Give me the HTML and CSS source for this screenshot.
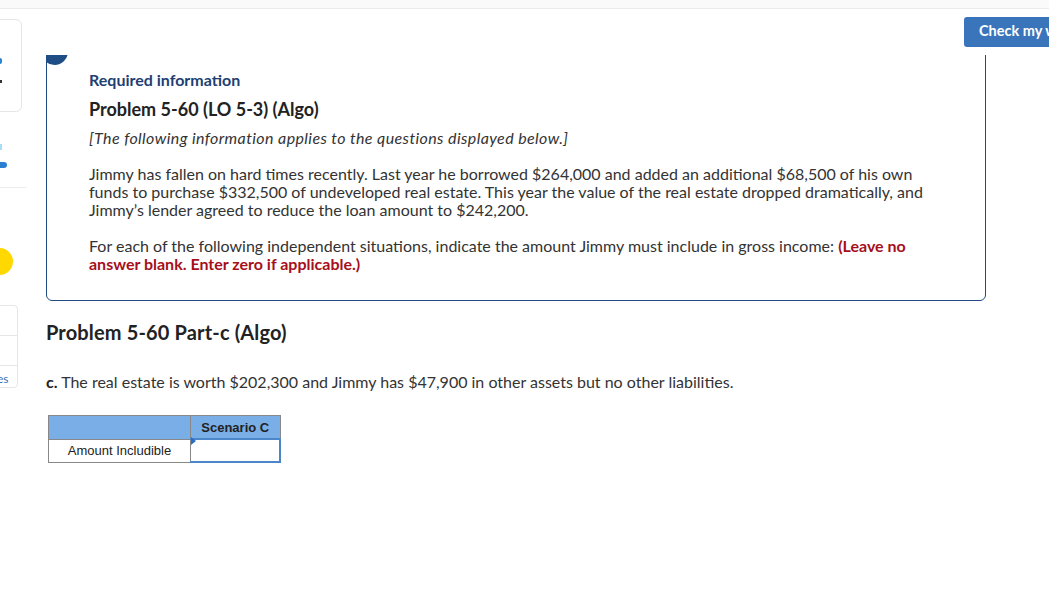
FILE: index.html
```html
<!DOCTYPE html>
<html>
<head>
<meta charset="utf-8">
<link rel="stylesheet" href="styles.css">
</head>
<body>
<div class="topbar"></div>
<div class="page">
  <aside class="sidebar">
    <div class="side-card">
      <span class="sc-a"></span>
      <span class="sc-b"></span>
    </div>
    <div class="side-nav">
      <span class="sn-mark"></span>
      <span class="sn-bar"></span>
    </div>
    <div class="side-sep"></div>
    <div class="side-dot"></div>
    <div class="side-list">
      <div class="sl-row"></div>
      <div class="sl-row"></div>
      <div class="sl-row sl-last">es</div>
    </div>
  </aside>
  <main class="main">
    <header class="head">
      <button class="check">Check my work</button>
    </header>
    <div class="scroll">
      <section class="card">
        <span class="badge"></span>
        <h3 class="req">Required information</h3>
        <h2 class="prob">Problem 5-60 (LO 5-3) (Algo)</h2>
        <p class="note">[The following information applies to the questions displayed below.]</p>
        <p class="para">Jimmy has fallen on hard times recently. Last year he borrowed $264,000 and added an additional $68,500 of his own funds to purchase $332,500 of undeveloped real estate. This year the value of the real estate dropped dramatically, and Jimmy’s lender agreed to reduce the loan amount to $242,200.</p>
        <p class="para para2">For each of the following independent situations, indicate the amount Jimmy must include in gross income: <strong class="warn">(Leave no answer blank. Enter zero if applicable.)</strong></p>
      </section>
      <h2 class="part">Problem 5-60 Part-c (Algo)</h2>
      <p class="question"><strong>c.</strong> The real estate is worth $202,300 and Jimmy has $47,900 in other assets but no other liabilities.</p>
      <table class="grid">
        <tr class="hdr"><th class="c1"></th><th class="c2">Scenario C</th></tr>
        <tr><td class="c1">Amount Includible</td><td class="c2 input"><span class="flag"></span></td></tr>
      </table>
    </div>
  </main>
</div>
</body>
</html>
```

FILE: styles.css
```css
html, body {
  margin: 0;
  padding: 0;
  background: #fff;
  overflow: hidden;
  width: 1049px;
  height: 590px;
}
body {
  font-family: Lato, "Open Sans", sans-serif;
  color: #333;
}
.topbar {
  height: 8px;
  background: #fafafa;
  border-bottom: 1px solid #ececec;
}
.page {
  display: flex;
  align-items: flex-start;
}
.sidebar {
  width: 27px;
  flex-shrink: 0;
  display: flex;
  flex-direction: column;
  position: relative;
}
.side-card {
  margin-top: 10px;
  margin-left: -20px;
  width: 42px;
  height: 93px;
  border: 1px solid #e6e6e6;
  border-radius: 6px;
  box-sizing: border-box;
  position: relative;
}
.sc-a {
  position: absolute;
  left: 19px;
  top: 38px;
  width: 2px;
  height: 6px;
  border-radius: 0 2px 2px 0;
  background: #2b84d0;
}
.sc-b {
  position: absolute;
  left: 19px;
  top: 60px;
  width: 2px;
  height: 3px;
  background: #333;
}
.side-nav {
  height: 75px;
  position: relative;
}
.sn-mark {
  position: absolute;
  left: 0;
  top: 32px;
  width: 2px;
  height: 6px;
  background: #a8ddf7;
}
.sn-bar {
  position: absolute;
  left: -4px;
  top: 50px;
  width: 11px;
  height: 6px;
  border-radius: 3px;
  background: #2b7fd0;
}
.side-sep {
  height: 1px;
  background: #ececec;
  width: 26px;
}
.side-dot {
  margin-top: 60px;
  margin-left: -14px;
  width: 27px;
  height: 27px;
  border-radius: 50%;
  background: #ffd800;
}
.side-list {
  margin-top: 30px;
  margin-left: -10px;
  width: 28px;
  border: 1px solid #e6e6e6;
  border-radius: 4px;
  box-sizing: border-box;
}
.sl-row {
  height: 29px;
  border-bottom: 1px solid #e6e6e6;
}
.sl-last {
  border-bottom: none;
  height: 21px;
  box-sizing: border-box;
  padding: 6px 0 0 6px;
  font-size: 12px;
  color: #3a6fb5;
  text-align: left;
  line-height: 14px;
  overflow: hidden;
}
.main {
  flex: 1;
  min-width: 0;
  padding-left: 19px;
}
.head {
  height: 46px;
  display: flex;
}
.check {
  margin-top: 8px;
  margin-left: 918px;
  height: 30px;
  flex-shrink: 0;
  width: 120px;
  padding: 0 0 3px 15px;
  text-align: left;
  border: none;
  border-radius: 3px;
  background: #3a75bb;
  color: #fff;
  font-family: Lato, sans-serif;
  font-weight: 700;
  font-size: 14.5px;
  white-space: nowrap;
}
.scroll {
  overflow: hidden;
  height: 535px;
}
.card {
  position: relative;
  margin-top: -17px;
  width: 940px;
  box-sizing: border-box;
  border: 1px solid #1f4b82;
  border-radius: 6px;
  padding: 31px 35px 27px 42px;
}
.badge {
  position: absolute;
  left: -6px;
  top: -1px;
  width: 27px;
  height: 27px;
  border-radius: 50%;
  background: #1f4e87;
}
.req {
  margin: 0;
  font-size: 16px;
  font-weight: 700;
  color: #1e3f72;
  line-height: 20px;
}
.prob {
  margin: 8px 0 0;
  font-size: 18px;
  font-weight: 700;
  color: #222;
  line-height: 22px;
}
.note {
  margin: 8px 0 0;
  font-size: 16px;
  font-style: italic;
  letter-spacing: 0.4px;
  line-height: 20px;
}
.para {
  margin: 17px 0 0;
  font-size: 16px;
  line-height: 18px;
  color: #333;
}
.para2 {
  margin-top: 18px;
}
.warn {
  color: #a60f1b;
}
.part {
  margin: 19px 0 0;
  font-size: 20px;
  font-weight: 700;
  letter-spacing: 0.15px;
  color: #222;
  line-height: 24px;
}
.question {
  margin: 29px 0 0;
  font-size: 16px;
  line-height: 18px;
}
.question strong {
  color: #222;
}
.grid {
  margin: 24px 0 0 2px;
  border-collapse: collapse;
  font-family: "Liberation Sans", Arial, sans-serif;
  font-size: 13px;
  color: #222;
}
.grid th, .grid td {
  border: 1px solid #888;
  padding: 0;
  text-align: center;
}
.grid .hdr th {
  background: #7aaee6;
  height: 22px;
  font-weight: 700;
}
.grid td {
  height: 21px;
}
.grid .c1 {
  width: 141px;
}
.grid .c2 {
  width: 88px;
}
.grid td.input {
  position: relative;
  border: 2px solid #4a86c8;
  border-left-width: 1px;
}
.flag {
  position: absolute;
  left: 0;
  top: 0;
  width: 0;
  height: 0;
  border-top: 4px solid transparent;
  border-bottom: 4px solid transparent;
  border-left: 5px solid #2b6fc4;
  margin-top: -3px;
}
```
